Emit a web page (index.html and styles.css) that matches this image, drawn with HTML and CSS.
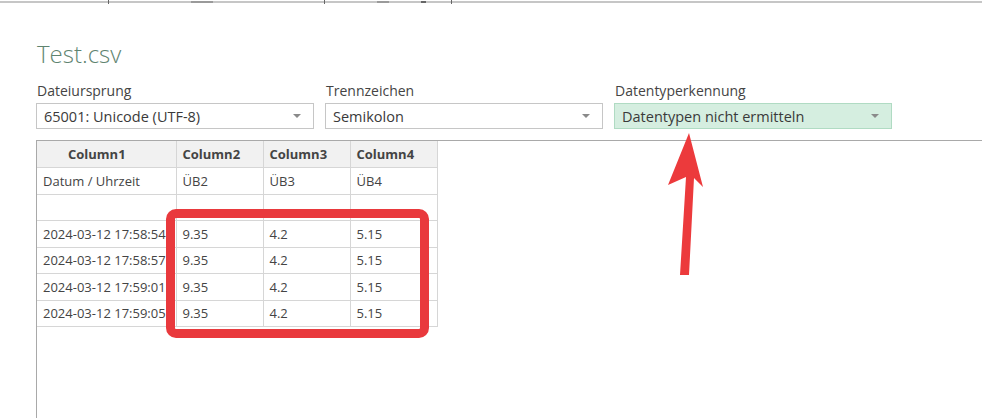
FILE: index.html
```html
<!DOCTYPE html>
<html lang="de">
<head>
    <meta charset="UTF-8">
    <meta name="viewport" content="width=device-width, initial-scale=1.0">
    <title>Test.csv</title>
    <link rel="stylesheet" href="styles.css">
</head>
<body>
    <!-- obere Kante -->
    <div class="topbar">
        <span class="tick t1"></span>
        <span class="tick t2"></span>
        <span class="tick t3"></span>
        <span class="tick t4"></span>
        <span class="tick t5"></span>
        <span class="tick t6"></span>
    </div>

    <div class="dialog">
        <h1 class="title">Test.csv</h1>

        <!-- Auswahlfelder -->
        <div class="fields">
            <div class="field">
                <label>Dateiursprung</label>
                <div class="select">
                    <span>65001: Unicode (UTF-8)</span>
                    <i class="caret"></i>
                </div>
            </div>
            <div class="field">
                <label>Trennzeichen</label>
                <div class="select">
                    <span>Semikolon</span>
                    <i class="caret"></i>
                </div>
            </div>
            <div class="field">
                <label>Datentyperkennung</label>
                <div class="select active">
                    <span>Datentypen nicht ermitteln</span>
                    <i class="caret"></i>
                </div>
            </div>
        </div>

        <!-- Vorschau -->
        <div class="preview">
            <table class="grid">
                <thead>
                    <tr>
                        <th class="first">Column1</th>
                        <th>Column2</th>
                        <th>Column3</th>
                        <th>Column4</th>
                    </tr>
                </thead>
                <tbody id="rows"></tbody>
            </table>
        </div>
    </div>

    <!-- Markierungen -->
    <div class="mark-box"></div>
    <svg class="mark-arrow" width="60" height="150" viewBox="0 0 60 150">
        <polygon points="29,2 8,54 26,46 20,144 29,144 34,47 43,56" fill="#ec3a3c"/>
    </svg>

    <script>
        // Vorschaudaten
        const rows = [
            ['Datum / Uhrzeit', 'ÜB2', 'ÜB3', 'ÜB4'],
            ['', '', '', ''],
            ['2024-03-12 17:58:54', '9.35', '4.2', '5.15'],
            ['2024-03-12 17:58:57', '9.35', '4.2', '5.15'],
            ['2024-03-12 17:59:01', '9.35', '4.2', '5.15'],
            ['2024-03-12 17:59:05', '9.35', '4.2', '5.15']
        ];

        const body = document.getElementById('rows');
        rows.forEach(row => {
            const tr = document.createElement('tr');
            row.forEach(cell => {
                const td = document.createElement('td');
                td.innerHTML = `<div class="cell">${cell}</div>`;
                tr.appendChild(td);
            });
            body.appendChild(tr);
        });
    </script>
</body>
</html>
```

FILE: styles.css
```css
* {
    margin: 0;
    padding: 0;
    box-sizing: border-box;
}

body {
    font-family: 'Open Sans', 'Noto Sans', sans-serif;
    color: #333;
    background: #fff;
    height: 419px;
    overflow: hidden;
}

/* obere Kante */
.topbar {
    position: relative;
    height: 3px;
    border-top: 1px solid #fff;
    border-bottom: 2px solid #c6c6c6;
}

.tick {
    position: absolute;
    top: 0;
    height: 2px;
    background: #9a9a9a;
}

.t1 { left: 108px; width: 1px; height: 4px; top: -1px; background: #666; }
.t2 { left: 191px; width: 22px; }
.t3 { left: 324px; width: 1px; height: 4px; top: -1px; background: #666; }
.t4 { left: 377px; width: 12px; }
.t5 { left: 421px; width: 5px; background: #666; }
.t6 { left: 451px; width: 1px; height: 4px; top: -1px; background: #666; }

.dialog {
    padding-left: 36px;
}

.title {
    font-size: 24px;
    font-weight: 300;
    color: #5f8470;
    line-height: 30px;
    margin-top: 36px;
    margin-left: 1px;
}

/* Auswahlfelder */
.fields {
    display: flex;
    gap: 11px;
    margin-top: 13px;
}

.field {
    width: 278px;
}

.field label {
    display: block;
    font-size: 14px;
    color: #444;
    line-height: 18px;
    margin-left: 1px;
    margin-bottom: 3px;
}

.select {
    display: flex;
    align-items: center;
    justify-content: space-between;
    height: 26px;
    padding: 0 12px 0 7px;
    border: 1px solid #c6c6c6;
    font-size: 14.5px;
    color: #3a3a3a;
}

.select.active {
    background: #d5eee0;
    border-color: #b0dbc3;
}

.caret {
    width: 0;
    height: 0;
    border-left: 4px solid transparent;
    border-right: 4px solid transparent;
    border-top: 4px solid #8a8a8a;
}

/* Vorschau */
.preview {
    margin-top: 11px;
    border-top: 1px solid #a9a9a9;
    border-left: 1px solid #a9a9a9;
    height: 278px;
}

.grid {
    border-collapse: collapse;
    font-size: 13px;
    color: #444;
}

.grid th,
.grid td {
    border: 1px solid #d6d6d6;
    height: 26.5px;
    text-align: left;
    padding: 0;
    font-weight: normal;
}

.grid tr > :first-child {
    border-left: none;
}

.grid thead tr > * {
    border-top: none;
}

.grid th {
    background: #f1f1f1;
    font-weight: 700;
    color: #444;
    padding-left: 6px;
}

.grid th.first {
    padding-left: 31px;
}

.grid td:nth-child(1) { width: 139px; }
.grid td:nth-child(2) { width: 87px; }
.grid td:nth-child(3) { width: 87px; }
.grid td:nth-child(4) { width: 87px; }

.cell {
    padding-left: 6px;
    white-space: nowrap;
    overflow: hidden;
}

.grid td:first-child .cell {
    width: 138px;
}

/* Markierungen */
.mark-box {
    position: absolute;
    left: 166px;
    top: 209px;
    width: 263px;
    height: 129px;
    border: 9px solid #e9393d;
    border-radius: 10px;
}

.mark-arrow {
    position: absolute;
    left: 660px;
    top: 131px;
}
```
